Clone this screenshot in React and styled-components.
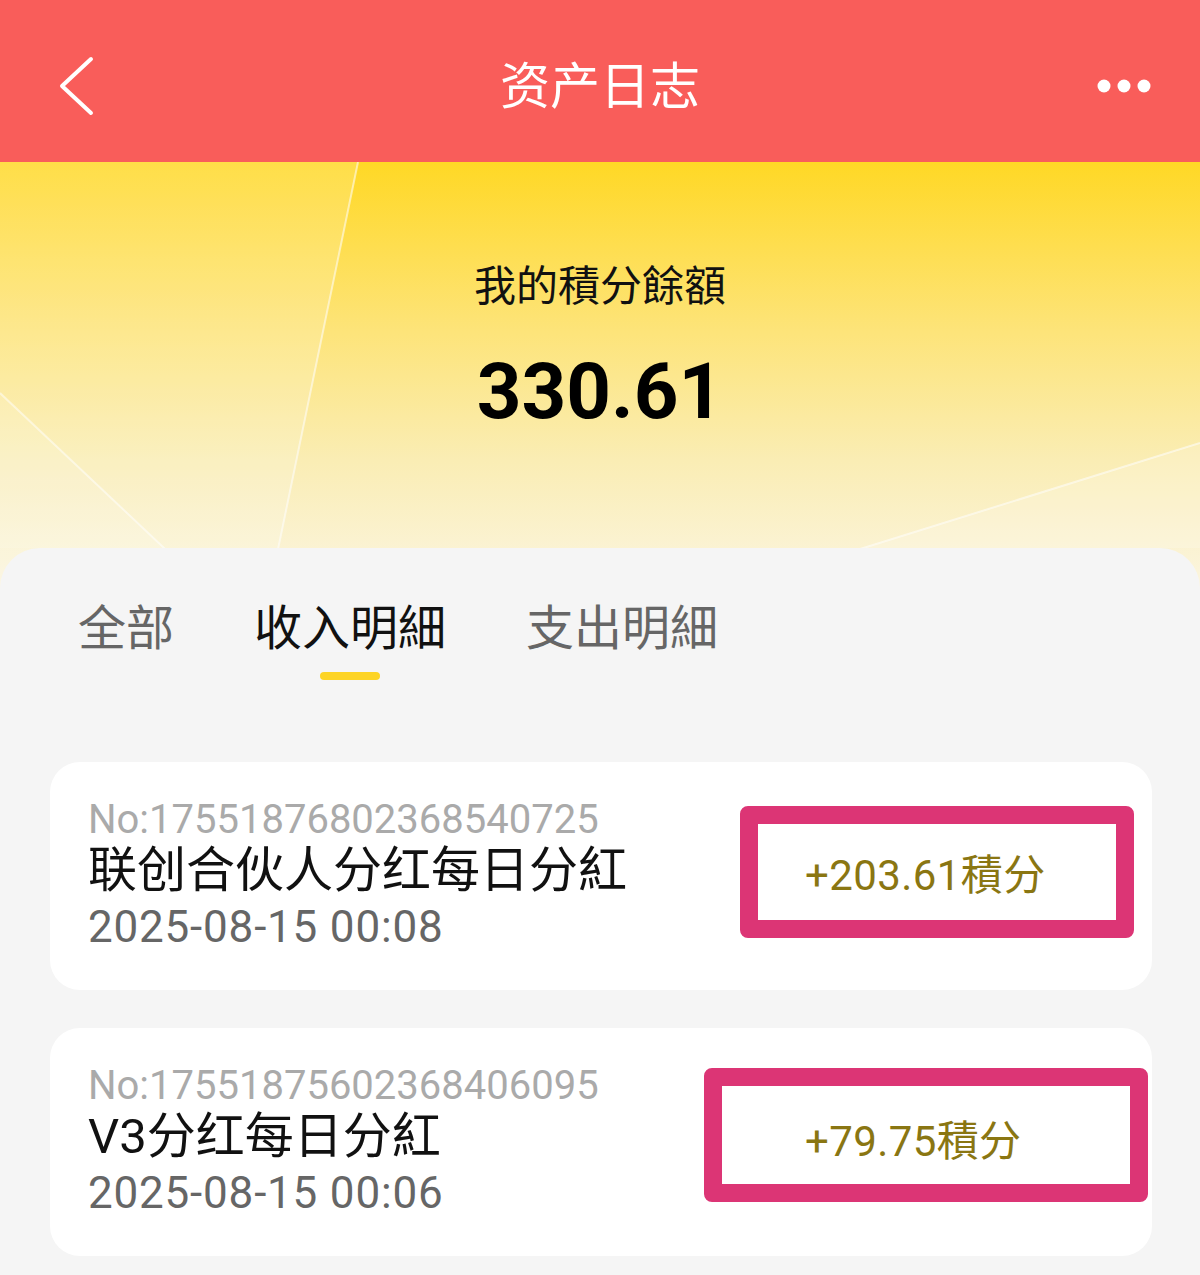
import React from "react";
import styled, { createGlobalStyle } from "styled-components";

const GlobalStyle = createGlobalStyle`
  * { box-sizing: border-box; }
  body {
    margin: 0;
    background: #f5f5f5;
    font-family: Roboto, "Noto Sans CJK SC", sans-serif;
  }
`;

const records = [
  {
    no: "No:17551876802368540725",
    title: "联创合伙人分红每日分紅",
    time: "2025-08-15 00:08",
    amount: "+203.61積分",
    mark: { x: 690, y: 44, w: 394, h: 132 },
  },
  {
    no: "No:17551875602368406095",
    title: "V3分红每日分紅",
    time: "2025-08-15 00:06",
    amount: "+79.75積分",
    mark: { x: 654, y: 40, w: 444, h: 134 },
  },
];

const tabs = ["全部", "收入明細", "支出明細"];

const Page = styled.div`
  width: 1200px;
  min-height: 1275px;
  background: #f5f5f5;
  overflow: hidden;
`;

const NavBar = styled.header`
  height: 162px;
  background: #f95d5a;
  display: grid;
  grid-template-columns: 140px 1fr 140px;
  align-items: center;
`;

const NavButton = styled.button`
  border: 0;
  background: none;
  padding: 0;
  height: 70px;
  margin-top: 10px;
  display: flex;
  align-items: center;
  justify-content: ${(p) => (p.$right ? "flex-end" : "flex-start")};
  padding-left: ${(p) => (p.$right ? "0" : "57px")};
  padding-right: ${(p) => (p.$right ? "49px" : "0")};
`;

const NavTitle = styled.h1`
  margin: 0;
  text-align: center;
  color: #fff;
  font-family: "Noto Sans CJK SC", sans-serif;
  font-weight: 400;
  font-size: 50px;
  line-height: 1;
  padding-top: 2px;
`;

const Hero = styled.section`
  position: relative;
  height: 426px;
  background: linear-gradient(180deg, #ffd825 0%, #fde47a 40%, #faedb4 70%, #fbf5e0 100%);
  display: flex;
  flex-direction: column;
  align-items: center;
  padding-top: 98px;
`;

const Rays = styled.svg`
  position: absolute;
  inset: 0;
  width: 100%;
  height: 100%;
`;

const BalanceLabel = styled.div`
  position: relative;
  font-family: "Noto Sans CJK SC", sans-serif;
  font-size: 42px;
  line-height: 46px;
  color: #111;
`;

const BalanceValue = styled.div`
  position: relative;
  margin-top: 46px;
  font-family: Roboto, sans-serif;
  font-weight: 700;
  font-size: 78px;
  line-height: 80px;
  color: #000;
`;

const Panel = styled.main`
  position: relative;
  margin-top: -40px;
  background: #f5f5f5;
  border-radius: 40px 40px 0 0;
  padding: 52px 48px 20px 50px;
`;

const TabBar = styled.nav`
  display: flex;
  gap: 80px;
  padding-left: 28px;
`;

const Tab = styled.div`
  display: flex;
  flex-direction: column;
  align-items: center;
  font-family: "Noto Sans CJK SC", sans-serif;
  font-size: 48px;
  line-height: 48px;
  color: ${(p) => (p.$active ? "#111" : "#666")};

  &::after {
    content: "";
    margin-top: 24px;
    width: 60px;
    height: 8px;
    border-radius: 4px;
    background: ${(p) => (p.$active ? "#fdd425" : "transparent")};
  }
`;

const List = styled.div`
  margin-top: 82px;
  display: flex;
  flex-direction: column;
  gap: 38px;
`;

const Card = styled.article`
  position: relative;
  height: 228px;
  background: #fff;
  border-radius: 30px;
  display: grid;
  grid-template-columns: 1fr 347px;
  align-items: center;
  padding-left: 38px;
`;

const Info = styled.div`
  display: flex;
  flex-direction: column;
`;

const OrderNo = styled.div`
  font-family: Roboto, sans-serif;
  font-size: 40px;
  line-height: 50px;
  color: #aaa;
`;

const RecordTitle = styled.div`
  font-family: Roboto, "Noto Sans CJK SC", sans-serif;
  font-size: 49px;
  line-height: 52px;
  color: #111;
`;

const RecordTime = styled.div`
  font-family: Roboto, sans-serif;
  font-size: 44px;
  line-height: 60px;
  letter-spacing: 0.8px;
  color: #666;
`;

const Amount = styled.div`
  font-family: Roboto, "Noto Sans CJK SC", sans-serif;
  font-size: 42px;
  line-height: 50px;
  letter-spacing: 0.4px;
  color: #8a7612;
`;

const Highlight = styled.div`
  position: absolute;
  left: ${(p) => p.$x}px;
  top: ${(p) => p.$y}px;
  width: ${(p) => p.$w}px;
  height: ${(p) => p.$h}px;
  border: 18px solid #dc3575;
  border-radius: 8px;
  pointer-events: none;
`;

export default function App() {
  return (
    <Page>
      <GlobalStyle />
      <NavBar>
        <NavButton aria-label="back">
          <svg width="40" height="60" viewBox="0 0 40 60">
            <path d="M34 3 L5 30 L34 57" fill="none" stroke="#fff" strokeWidth="4" strokeLinecap="round" strokeLinejoin="round" />
          </svg>
        </NavButton>
        <NavTitle>资产日志</NavTitle>
        <NavButton $right aria-label="more">
          <svg width="54" height="14" viewBox="0 0 54 14">
            <circle cx="7" cy="7" r="6.5" fill="#fff" />
            <circle cx="27" cy="7" r="6.5" fill="#fff" />
            <circle cx="47" cy="7" r="6.5" fill="#fff" />
          </svg>
        </NavButton>
      </NavBar>

      <Hero>
        <Rays viewBox="0 0 1200 426" preserveAspectRatio="none">
          <polygon points="0,0 358,0 270,426 0,426" fill="#fff" opacity="0.16" />
          <polygon points="0,231 165,386 0,386" fill="#fff" opacity="0.12" />
          <polygon points="1200,281 865,386 1200,386" fill="#fff" opacity="0.18" />
          <line x1="358" y1="0" x2="270" y2="426" stroke="#fff" strokeWidth="2" opacity="0.55" />
          <line x1="0" y1="231" x2="200" y2="420" stroke="#fff" strokeWidth="2" opacity="0.5" />
          <line x1="1200" y1="281" x2="780" y2="412" stroke="#fff" strokeWidth="2" opacity="0.55" />
        </Rays>
        <BalanceLabel>我的積分餘額</BalanceLabel>
        <BalanceValue>330.61</BalanceValue>
      </Hero>

      <Panel>
        <TabBar>
          {tabs.map((t, i) => (
            <Tab key={t} $active={i === 1}>
              {t}
            </Tab>
          ))}
        </TabBar>

        <List>
          {records.map((r) => (
            <Card key={r.no}>
              <Info>
                <OrderNo>{r.no}</OrderNo>
                <RecordTitle>{r.title}</RecordTitle>
                <RecordTime>{r.time}</RecordTime>
              </Info>
              <Amount>{r.amount}</Amount>
              <Highlight $x={r.mark.x} $y={r.mark.y} $w={r.mark.w} $h={r.mark.h} />
            </Card>
          ))}
        </List>
      </Panel>
    </Page>
  );
}
